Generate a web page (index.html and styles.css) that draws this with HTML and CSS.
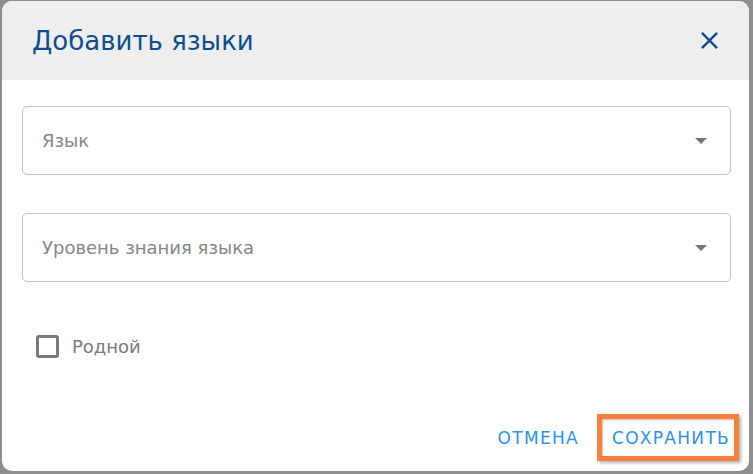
FILE: index.html
```html
<!DOCTYPE html>
<html lang="ru">
<head>
<meta charset="utf-8">
<title>Добавить языки</title>
<link rel="stylesheet" href="styles.css">
</head>
<body>
<div class="dialog">
  <div class="header">
    <h2 class="title">Добавить языки</h2>
    <button class="close" aria-label="Закрыть">
      <svg viewBox="0 0 24 24" width="29" height="29"><path d="M19 6.41 17.59 5 12 10.59 6.41 5 5 6.41 10.59 12 5 17.59 6.41 19 12 13.41 17.59 19 19 17.59 13.41 12z" fill="currentColor"/></svg>
    </button>
  </div>
  <div class="content">
    <div class="field">
      <span class="placeholder">Язык</span>
      <span class="arrow"></span>
    </div>
    <div class="field field-second">
      <span class="placeholder">Уровень знания языка</span>
      <span class="arrow"></span>
    </div>
    <label class="check">
      <span class="box"></span>
      <span class="check-label">Родной</span>
    </label>
  </div>
  <div class="actions">
    <button class="btn">ОТМЕНА</button>
    <button class="btn btn-save">СОХРАНИТЬ</button>
  </div>
</div>
</body>
</html>
```
FILE: styles.css
```css
html, body {
  margin: 0;
  padding: 0;
}
body {
  background: #8e8e8e;
  width: 753px;
  height: 474px;
  overflow: hidden;
  font-family: "DejaVu Sans", "Liberation Sans", sans-serif;
}
.dialog {
  margin: 1px 4px 0 2px;
  width: 747px;
  height: 470px;
  background: #ffffff;
  border-radius: 10px;
  overflow: hidden;
  display: flex;
  flex-direction: column;
}
.header {
  height: 79px;
  flex: none;
  background: #eeeeee;
  display: flex;
  align-items: center;
  justify-content: space-between;
  padding: 0 25px 0 30px;
}
.title {
  margin: 0;
  font-weight: normal;
  font-size: 26px;
  color: #0e4e8e;
  line-height: 30px;
}
.close {
  border: 0;
  background: none;
  padding: 0;
  width: 29px;
  height: 29px;
  color: #0e4e8e;
  display: flex;
}
.content {
  padding: 26px 18px 0 20px;
  display: flex;
  flex-direction: column;
}
.field {
  height: 67px;
  border: 1px solid #c2c2c2;
  border-radius: 5px;
  display: flex;
  align-items: center;
  justify-content: space-between;
  padding: 0 23px 0 19px;
}
.field-second {
  margin-top: 38px;
}
.placeholder {
  font-size: 18px;
  color: #868686;
}
.arrow {
  width: 0;
  height: 0;
  border-left: 6px solid transparent;
  border-right: 6px solid transparent;
  border-top: 6px solid #767676;
}
.check {
  display: flex;
  align-items: center;
  margin-top: 53px;
  padding-left: 14px;
}
.box {
  width: 17px;
  height: 17px;
  border: 3px solid #7a7a7a;
  border-radius: 3px;
}
.check-label {
  margin-left: 13px;
  font-size: 18px;
  color: #7a7a7a;
}
.actions {
  margin-top: auto;
  display: flex;
  justify-content: flex-end;
  align-items: center;
  padding: 0 10px 10px 0;
}
.btn {
  border: 0;
  background: none;
  font-family: "DejaVu Sans", "Liberation Sans", sans-serif;
  font-size: 17px;
  letter-spacing: 1.3px;
  color: #2a93ee;
  padding: 0 8px;
  line-height: 20px;
}
.btn-save {
  margin-left: 10px;
  width: 142px;
  height: 47px;
  border: 5px solid #fa7f3d;
  padding: 0 0 0 10px;
  text-align: left;
  white-space: nowrap;
  box-shadow: 2px 2px 3px rgba(0, 0, 0, 0.3), inset 1px 1px 2px rgba(0, 0, 0, 0.25);
}
```
